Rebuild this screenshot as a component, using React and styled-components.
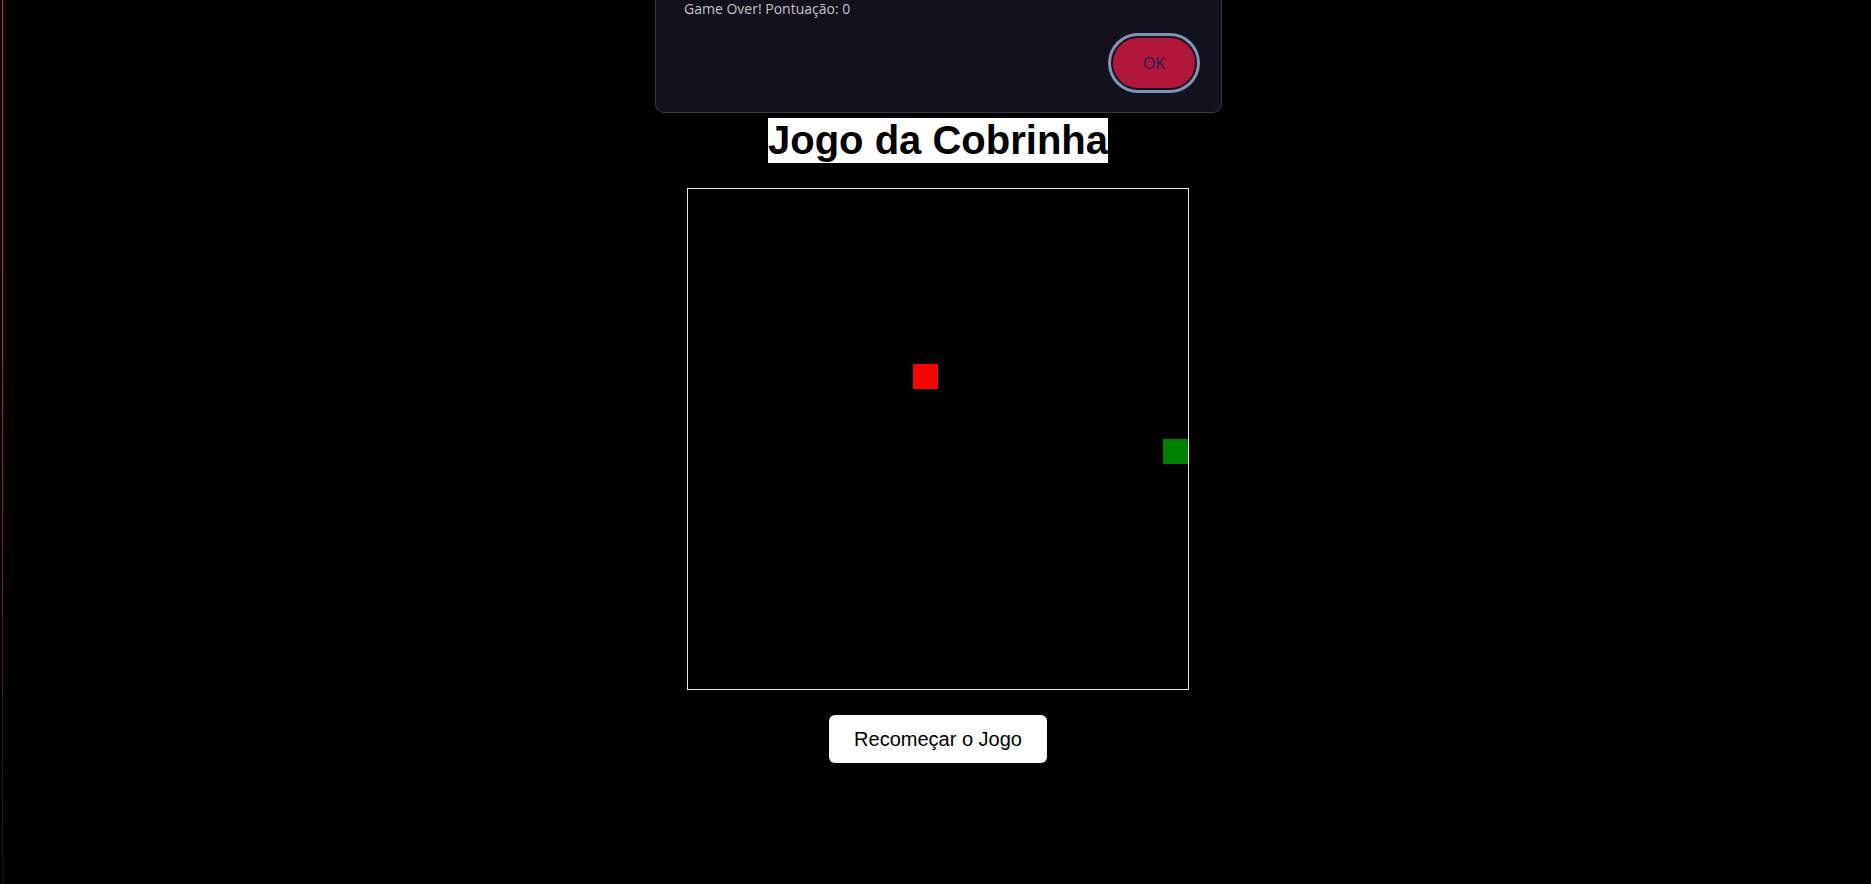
import React from 'react'
import styled, { createGlobalStyle } from 'styled-components'

const GlobalStyle = createGlobalStyle`
  html, body {
    margin: 0;
    padding: 0;
    background: #000;
  }
  #root {
    min-height: 100vh;
  }
`

const CELL = 25
const GRID = 20

const snake = [{ x: 19, y: 10 }]
const food = { x: 9, y: 7 }

const App = () => {
  return (
    <>
      <GlobalStyle />
      <Page>
        <EdgeLine />
        <Alert>
          <AlertMessage>Game Over! Pontuação: 0</AlertMessage>
          <AlertActions>
            <OkButton>OK</OkButton>
          </AlertActions>
        </Alert>
        <Game>
          <Title>Jogo da Cobrinha</Title>
          <Board>
            <Cell $x={food.x} $y={food.y} $color="#ff0000" />
            {snake.map((s, i) => (
              <Cell key={i} $x={s.x} $y={s.y} $color="#008000" />
            ))}
          </Board>
          <RestartButton>Recomeçar o Jogo</RestartButton>
        </Game>
      </Page>
    </>
  )
}

export default App

const Page = styled.div`
  position: relative;
  min-height: 884px;
  background: #000;
  overflow: hidden;
`

const EdgeLine = styled.div`
  position: absolute;
  left: 2px;
  top: 0;
  bottom: 0;
  width: 1px;
  background: linear-gradient(
    to bottom,
    #e4163f 0%,
    #d8153c 40%,
    #6a1430 70%,
    #2a1420 90%,
    #15121a 100%
  );
`

const Alert = styled.div`
  position: absolute;
  top: 0;
  left: 655px;
  width: 567px;
  box-sizing: border-box;
  background: #13111b;
  border: 1px solid #3a3940;
  border-top: none;
  border-radius: 0 0 9px 9px;
  padding: 0 24px 22px 28px;
  font-family: "Open Sans", "Noto Sans", sans-serif;
  z-index: 2;
`

const AlertMessage = styled.div`
  font-size: 14px;
  line-height: 20px;
  color: #c4c3cb;
  margin-top: -1px;
`

const AlertActions = styled.div`
  display: flex;
  justify-content: flex-end;
  margin-top: 17px;
`

const OkButton = styled.button`
  width: 86px;
  height: 54px;
  border-radius: 27px;
  background: #b1163b;
  border: 2px solid #16131d;
  box-shadow: 0 0 0 3px #8194b4;
  color: #1d1f4d;
  font-family: "Open Sans", "Noto Sans", sans-serif;
  font-size: 16px;
  padding: 0;
`

const Game = styled.div`
  display: flex;
  flex-direction: column;
  align-items: center;
  gap: 25px;
  padding-top: 118px;
  padding-left: 5px;
`

const Title = styled.h1`
  margin: 0;
  display: inline-block;
  background: #fff;
  color: #000;
  font-family: "Liberation Sans", Arial, sans-serif;
  font-weight: 700;
  font-size: 40px;
  line-height: 45px;
`

const Board = styled.div`
  display: grid;
  grid-template-columns: repeat(${GRID}, ${CELL}px);
  grid-template-rows: repeat(${GRID}, ${CELL}px);
  border: 1px solid #e6e6e6;
  background: #000;
`

const Cell = styled.div`
  grid-column: ${(p) => p.$x + 1};
  grid-row: ${(p) => p.$y + 1};
  background: ${(p) => p.$color};
`

const RestartButton = styled.button`
  background: #fff;
  color: #000;
  border: none;
  border-radius: 6px;
  padding: 12px 25px;
  font-family: "Liberation Sans", Arial, sans-serif;
  font-size: 20px;
  line-height: 24px;
`
